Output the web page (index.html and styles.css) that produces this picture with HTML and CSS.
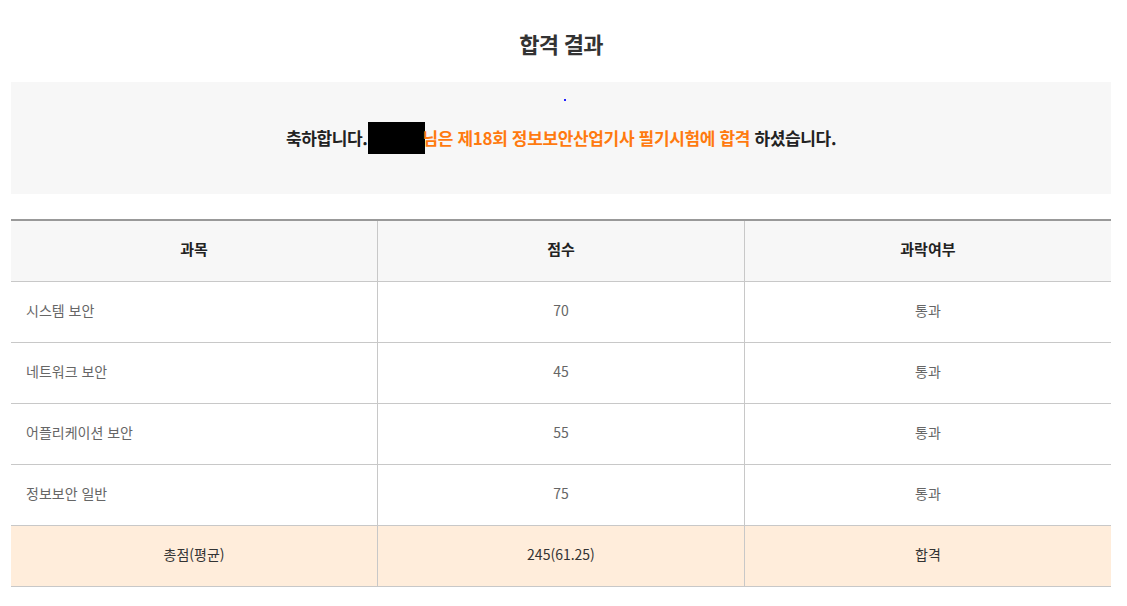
FILE: index.html
```html
<!DOCTYPE html>
<html lang="ko">
<head>
<meta charset="utf-8">
<link rel="stylesheet" href="styles.css">
</head>
<body>
<div class="wrap">
  <h2 class="title">합격 결과</h2>
  <div class="msg-box">
    <div class="dot-row"><span class="dot"></span></div>
    <p class="msg">축하합니다.<span class="mask"></span><span class="hl">님은 제18회 정보보안산업기사 필기시험에 합격</span> 하셨습니다.</p>
  </div>
  <table class="result">
    <thead>
      <tr><th>과목</th><th>점수</th><th>과락여부</th></tr>
    </thead>
    <tbody>
      <tr><td class="subj">시스템 보안</td><td>70</td><td>통과</td></tr>
      <tr><td class="subj">네트워크 보안</td><td>45</td><td>통과</td></tr>
      <tr><td class="subj">어플리케이션 보안</td><td>55</td><td>통과</td></tr>
      <tr><td class="subj">정보보안 일반</td><td>75</td><td>통과</td></tr>
    </tbody>
    <tfoot>
      <tr><td>총점(평균)</td><td>245(61.25)</td><td>합격</td></tr>
    </tfoot>
  </table>
</div>
</body>
</html>
```

FILE: styles.css
```css
* { box-sizing: border-box; }
body {
  margin: 0;
  background: #fff;
  font-family: "Noto Sans CJK KR", "Noto Sans", sans-serif;
  color: #333;
}
.wrap {
  width: 1100px;
  margin-left: 11px;
  padding-top: 27px;
}
.title {
  margin: 0;
  text-align: center;
  font-size: 22px;
  font-weight: 700;
  line-height: 32px;
  color: #333;
  letter-spacing: -0.7px;
}
.msg-box {
  margin-top: 23px;
  height: 112px;
  background: #f7f7f7;
  padding-top: 17px;
}
.dot-row {
  height: 2px;
  padding-left: 553px;
}
.dot {
  display: block;
  width: 2px;
  height: 2px;
  background: #2020ff;
}
.msg {
  margin: 21px 0 0;
  text-align: center;
  font-size: 17px;
  font-weight: 700;
  line-height: 32px;
  color: #222;
  letter-spacing: -0.35px;
}
.mask {
  display: inline-block;
  width: 57px;
  height: 32px;
  background: #000;
  vertical-align: top;
  margin-right: -2px;
}
.hl { color: #ff7a0f; }
.result {
  margin-top: 25px;
  width: 1100px;
  border-collapse: collapse;
  table-layout: fixed;
  border-top: 2px solid #999;
  border-bottom: 1px solid #c8c8c8;
}
.result th, .result td {
  height: 61px;
  border-left: 1px solid #c8c8c8;
  text-align: center;
  padding: 0 0 4px;
}
.result th:first-child, .result td:first-child { border-left: none; }
.result thead th {
  background: #f7f7f7;
  font-size: 15px;
  font-weight: 700;
  color: #222;
  border-bottom: 1px solid #c8c8c8;
}
.result tbody td {
  font-size: 14px;
  color: #666;
  border-bottom: 1px solid #c8c8c8;
}
.result tbody td.subj {
  text-align: left;
  padding-left: 15px;
}
.result tfoot td {
  background: #ffeddb;
  font-size: 14px;
  color: #333;
}
```
